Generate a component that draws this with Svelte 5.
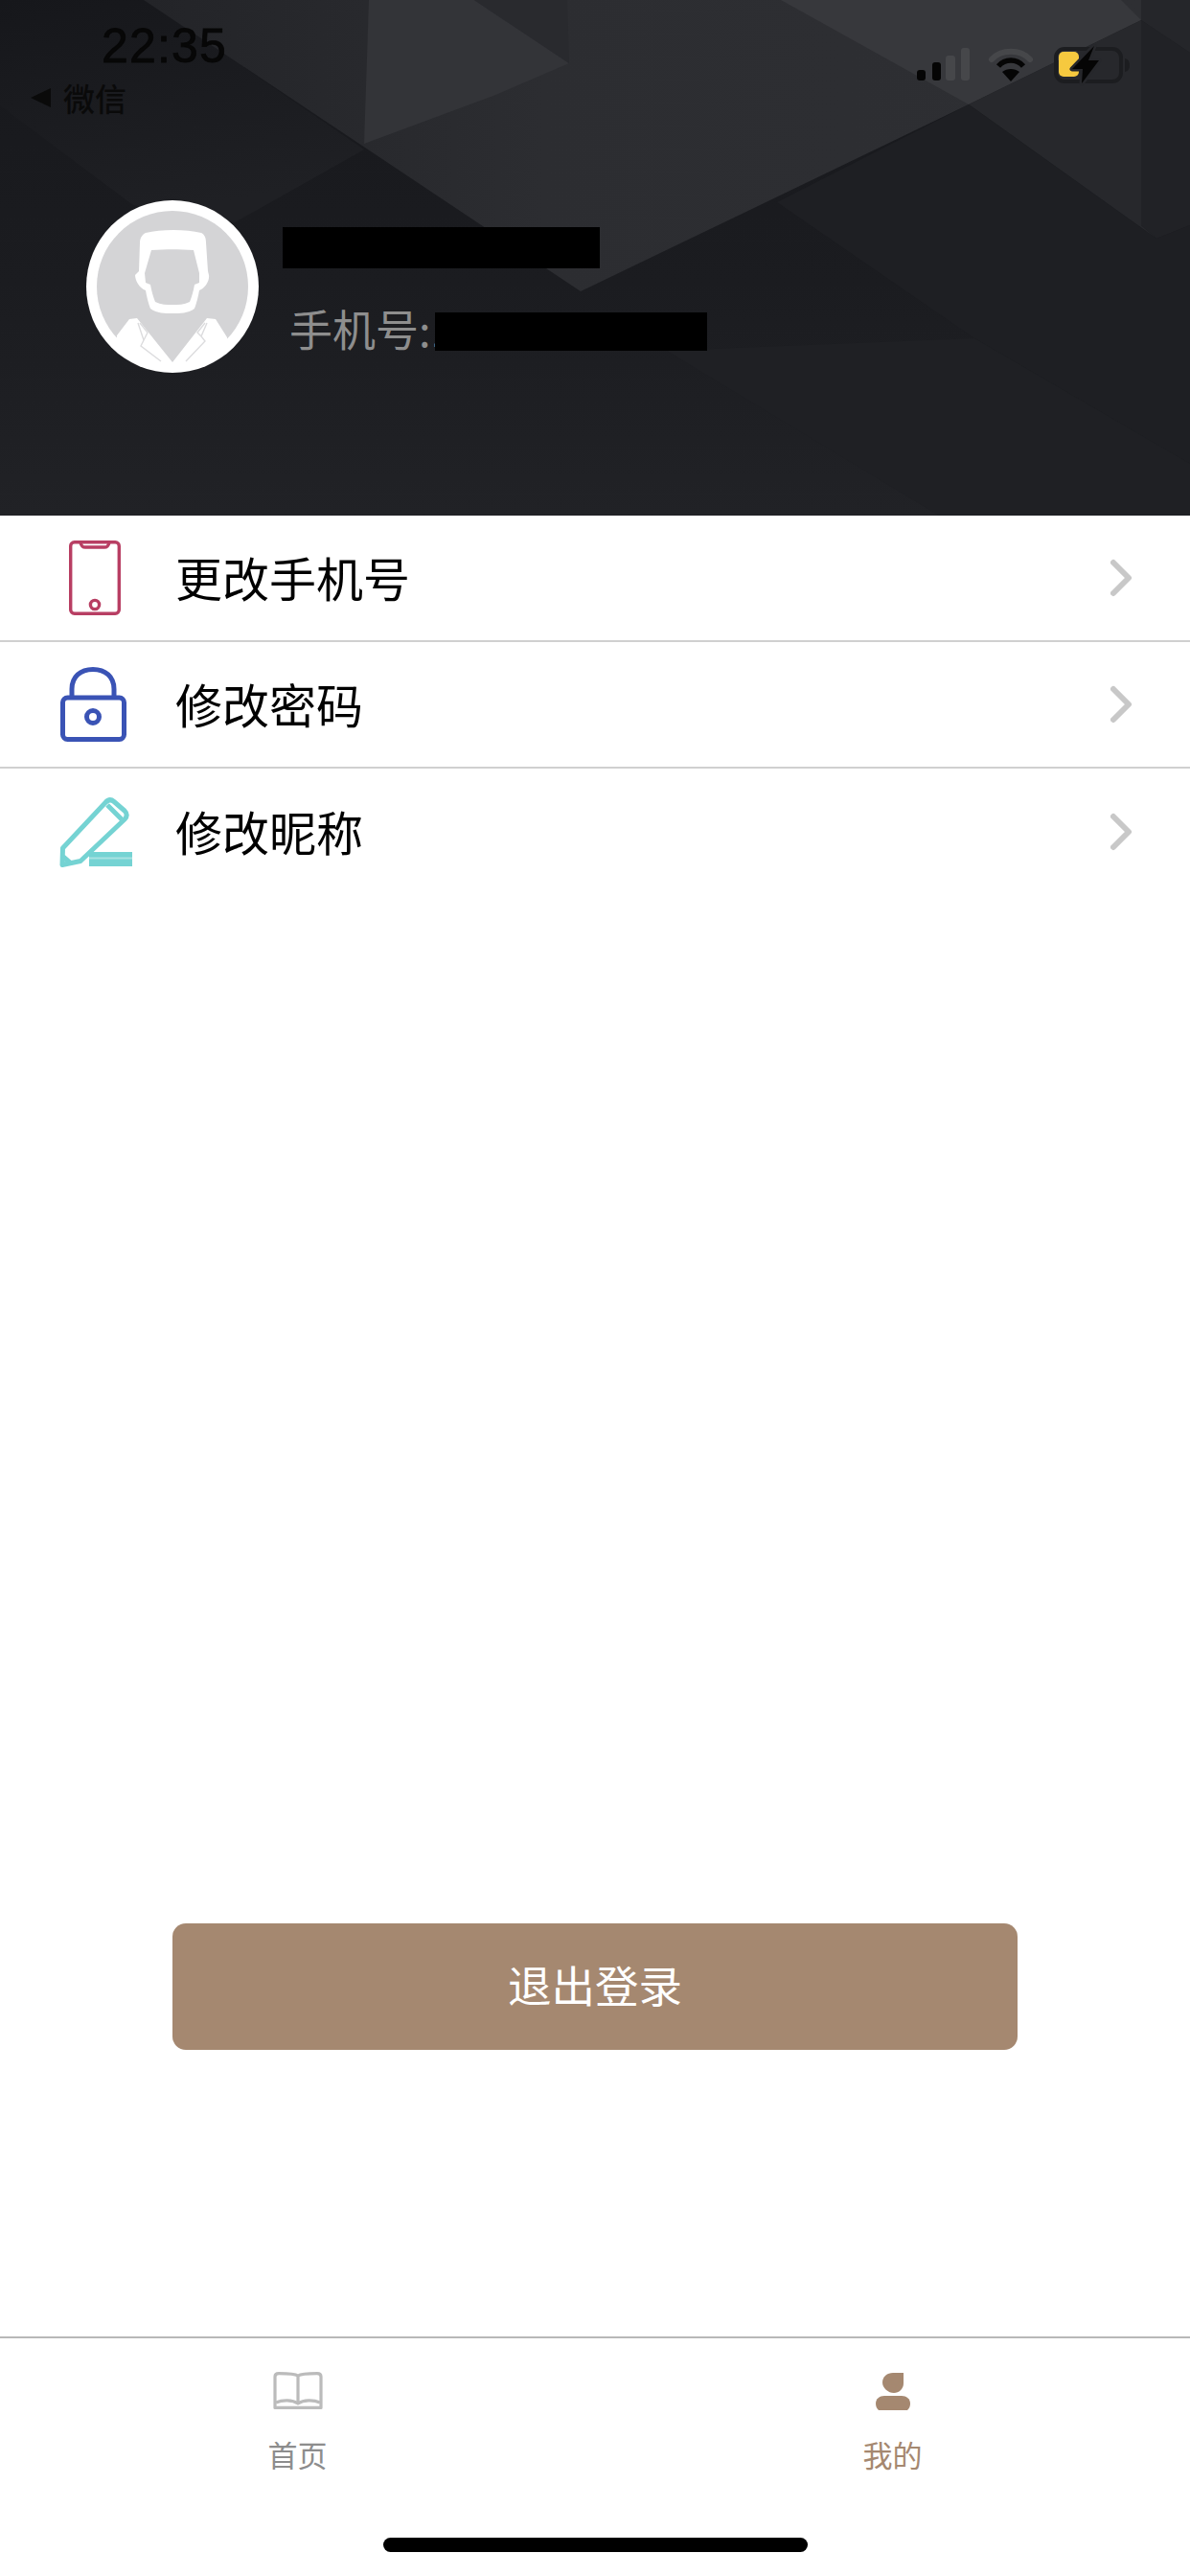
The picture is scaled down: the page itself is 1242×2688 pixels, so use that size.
<script>
  const menu = [
    { label: '更改手机号', icon: 'phone' },
    { label: '修改密码', icon: 'lock' },
    { label: '修改昵称', icon: 'pencil' }
  ];
</script>

<div class="page">
  <header class="hero">
    <svg class="hero-bg" viewBox="0 0 1242 538" preserveAspectRatio="none" aria-hidden="true">
      <defs>
        <linearGradient id="base" x1="0" y1="0" x2="0" y2="1">
          <stop offset="0" stop-color="#17181c" />
          <stop offset="0.55" stop-color="#1b1c20" />
          <stop offset="1" stop-color="#212226" />
        </linearGradient>
        <linearGradient id="upper" x1="0" y1="0" x2="1" y2="0">
          <stop offset="0" stop-color="#232428" />
          <stop offset="0.4" stop-color="#2c2d31" />
          <stop offset="1" stop-color="#2e2f33" />
        </linearGradient>
        <linearGradient id="leftband" x1="0" y1="0" x2="0.3" y2="1">
          <stop offset="0" stop-color="#16171b" />
          <stop offset="1" stop-color="#1f2024" />
        </linearGradient>
      </defs>
      <rect width="1242" height="538" fill="url(#base)" />
      <polygon points="0,110 139,214 245,232 380,156 238,59 150,0 0,0" fill="url(#leftband)" />
      <polygon points="150,0 606,304 1011,109 1191,21 1191,0" fill="url(#upper)" />
      <polygon points="385,0 380,150 515,100 594,66 495,0" fill="#333438" />
      <polygon points="495,0 594,66 592,0" fill="#292a2e" />
      <polygon points="815,0 1011,109 1191,21 1170,0" fill="#37383c" />
      <polygon points="1011,109 1191,21 1191,235 1207,249" fill="#27282c" />
      <polygon points="1191,21 1242,55 1242,235 1207,249 1191,235" fill="#212226" />
      <polygon points="1191,0 1242,0 1242,55 1191,21" fill="#25262a" />
      <polygon points="1017,353 1242,484 1242,235 1207,249 1011,109 811,211" fill="#1e1f23" />
      <polygon points="696,366 1017,353 1242,484 1242,538 980,538" fill="#1f2024" />
    </svg>

    <div class="status">
      <div class="status-left">
        <div class="time">22:35</div>
        <div class="back"><span class="tri"></span><span>微信</span></div>
      </div>
      <svg class="status-right" width="232" height="44" viewBox="0 0 232 44" aria-hidden="true">
        <g fill="#050505">
          <rect x="7" y="27" width="9" height="11" rx="3" />
          <rect x="23" y="19" width="9" height="19" rx="3" />
        </g>
        <g fill="#46474a">
          <rect x="37" y="12" width="10" height="26" rx="3" />
          <rect x="53" y="4" width="9" height="34" rx="3" />
        </g>
        <path d="M85 16 C95 5 115 5 125 16" fill="none" stroke="#46474a" stroke-width="6" stroke-linecap="round" />
        <path d="M92 23 C99 15 111 15 118 23" fill="none" stroke="#050505" stroke-width="5.5" />
        <path d="M105 39 L96 29 C101 25 109 25 114 29 Z" fill="#050505" />
        <rect x="152" y="5" width="68" height="34" rx="9" fill="none" stroke="#1c1d20" stroke-width="4" />
        <path d="M224 15 C228 16 229 19 229 22 C229 25 228 28 224 29 Z" fill="#1c1d20" />
        <rect x="155" y="8" width="21" height="26" rx="5" fill="#f6c93f" />
        <path d="M192 2 L169 26 L180 26 L179 41 L197 17 L186 17 Z" fill="#26272b" stroke="#26272b" stroke-width="5" stroke-linejoin="round" />
        <path d="M192 2 L169 26 L180 26 L179 41 L197 17 L186 17 Z" fill="#050505" />
      </svg>
    </div>

    <div class="profile">
      <svg class="avatar" width="180" height="180" viewBox="0 0 180 180" role="img" aria-label="头像">
        <defs>
          <clipPath id="ring"><circle cx="90" cy="90" r="89" /></clipPath>
        </defs>
        <circle cx="90" cy="90" r="90" fill="#fff" />
        <circle cx="90" cy="90" r="79" fill="#d4d4d6" />
        <path fill="#fff" d="M62 34 C78 30 104 30 120 34 C124 36 125 40 125 44 L127 74 L128 78 C129 84 124 92 118 94 C117 100 115 108 113 113 C106 118 98 118 90 118 C82 118 74 118 67 113 C65 108 63 100 62 94 C56 92 51 84 51 78 L55 74 L56 44 C56 40 58 36 62 34 Z" />
        <path fill="#d4d4d6" d="M68 52 C84 51 96 51 112 52 L118 76 L118 86 L113 88 C112 94 110 101 108 106 C102 109 96 109 90 109 C84 109 78 109 72 106 C70 101 68 94 67 88 L62 86 L61 76 Z" />
        <g clip-path="url(#ring)">
          <path fill="#fff" d="M32 141 L45 124 L53 123 L90 169 L126 123 L135 124 L147 143 L147 180 L32 180 Z" />
          <path fill="none" stroke="#dcdcde" stroke-width="1.4" d="M54 128 L60 146 L57 152 L78 168 M126 128 L120 142 L124 147 L104 168 M56 128 L64 138 L60 146 M124 128 L116 138 L120 142" />
        </g>
      </svg>
      <div class="info">
        <div class="redact name-box"></div>
        <div class="phone">
          <span class="phone-text">手机号:1</span>
          <div class="redact phone-box"></div>
        </div>
      </div>
    </div>
  </header>

  <main class="main">
    <ul class="menu">
      {#each menu as item}
        <li class="row">
          <svg class="row-icon" width="80" height="80" viewBox="0 0 80 80" aria-hidden="true">
            {#if item.icon === 'phone'}
              <g fill="none" stroke="#b83e63" stroke-width="3.4">
                <rect x="13.7" y="2.7" width="50.6" height="74.6" rx="4" />
                <path d="M24 3 C25 7 26 8 29 8 H49 C52 8 53 7 54 3" />
                <circle cx="39" cy="68" r="4.6" />
              </g>
            {:else if item.icon === 'lock'}
              <g fill="none" stroke="#3a53b5" stroke-width="5">
                <rect x="5.5" y="33" width="64" height="43.5" rx="5" />
                <path d="M15 33 V24 C15 11 24 3.5 37 3.5 C50 3.5 59 11 59 24 V33" />
                <circle cx="37" cy="53" r="6.5" />
              </g>
            {:else}
              <g fill="none" stroke="#75d3d3" stroke-width="5" stroke-linejoin="round">
                <path d="M5.5 57 L50 9.5 C53 6 56 6 59 8.5 L70 18 C73 21 73 24 70 27 L24 70.5 L5 74.5 Z" />
                <path d="M52 12 L67 27 M6 66 L14 73" />
              </g>
              <rect x="33" y="61" width="45" height="15" fill="#75d3d3" />
              <rect x="33" y="66.5" width="45" height="2" fill="#a8e2e2" />
            {/if}
          </svg>
          <span class="row-label">{item.label}</span>
          <svg class="chev" width="24" height="40" viewBox="0 0 24 40" aria-hidden="true">
            <path d="M3 4 L19 20 L3 36" fill="none" stroke="#c8c8c8" stroke-width="6" stroke-linecap="round" stroke-linejoin="round" />
          </svg>
        </li>
      {/each}
    </ul>
    <button class="logout" type="button">退出登录</button>
  </main>

  <footer class="tabbar">
    <nav class="tabs">
      <div class="tab">
        <svg width="60" height="40" viewBox="0 0 60 40" aria-hidden="true">
          <g fill="none" stroke="#bbbbbb" stroke-width="3.2" stroke-linejoin="round">
            <path d="M30 4 C27 2 20 1.6 10 1.6 C7 1.6 6 3 6 5 V37.4 H54 V5 C54 3 53 1.6 50 1.6 C40 1.6 33 2 30 4 Z" />
            <path d="M30 4 V32" />
            <path d="M7 32 C14 29 24 29 30 33 C36 29 46 29 53 32" />
          </g>
        </svg>
        <span>首页</span>
      </div>
      <div class="tab active">
        <svg width="60" height="40" viewBox="0 0 60 40" aria-hidden="true">
          <path fill="#a58870" d="M41 1 V12 C41 18 36 22 31 22 C25 22 19 17 19 11 C19 5 24 1 30 1 Z" />
          <path fill="#a58870" d="M15 40 C13 38 12 36 12 33 C12 28 16 25 21 25 H39 C44 25 48 28 48 33 C48 36 47 38 45 40 Z" />
        </svg>
        <span>我的</span>
      </div>
    </nav>
    <div class="home-bar"></div>
  </footer>
</div>

<style>
  :global(body) {
    margin: 0;
    background: #fff;
  }
  .page {
    width: 1242px;
    height: 2688px;
    display: flex;
    flex-direction: column;
    font-family: "Noto Sans CJK SC", "Liberation Sans", sans-serif;
    background: #fff;
  }
  .hero {
    position: relative;
    height: 538px;
    flex: none;
    overflow: hidden;
  }
  .hero-bg {
    position: absolute;
    inset: 0;
    width: 100%;
    height: 100%;
  }
  .status {
    position: relative;
    height: 209px;
    display: flex;
    justify-content: space-between;
    align-items: flex-start;
    padding: 0 60px 0 32px;
    box-sizing: border-box;
    color: #0a0a0a;
  }
  .status-left {
    padding-top: 20px;
  }
  .time {
    font-family: "Liberation Sans", sans-serif;
    font-size: 50px;
    line-height: 56px;
    letter-spacing: 1.2px;
    margin-left: 74px;
    color: #070707;
    -webkit-text-stroke: 0.8px #070707;
  }
  .back {
    display: flex;
    align-items: center;
    gap: 13px;
    font-size: 33px;
    font-weight: 500;
    line-height: 46px;
    margin-top: 3px;
  }
  .tri {
    width: 0;
    height: 0;
    border-top: 10px solid transparent;
    border-bottom: 10px solid transparent;
    border-right: 21px solid #0a0a0a;
  }
  .status-right {
    margin-top: 46px;
  }
  .profile {
    position: relative;
    display: flex;
    align-items: flex-start;
    gap: 25px;
    padding-left: 90px;
  }
  .avatar {
    flex: none;
  }
  .info {
    display: flex;
    flex-direction: column;
    padding-top: 28px;
  }
  .redact {
    background: #000;
  }
  .name-box {
    width: 331px;
    height: 43px;
  }
  .phone {
    display: flex;
    align-items: center;
    height: 40px;
    margin-top: 46px;
    padding-left: 7px;
    color: #8e8e8e;
    font-size: 45px;
    line-height: 40px;
    white-space: nowrap;
  }
  .phone-text {
    padding-bottom: 6px;
  }
  .phone-box {
    width: 284px;
    height: 40px;
    margin-left: -21px;
  }
  .main {
    flex: 1;
    display: flex;
    flex-direction: column;
  }
  .menu {
    list-style: none;
    margin: 0;
    padding: 0;
  }
  .row {
    height: 132px;
    box-sizing: border-box;
    display: flex;
    align-items: center;
    padding: 0 59px 0 60px;
    border-bottom: 2px solid #d0d0d0;
  }
  .row:last-child {
    border-bottom: 0;
  }
  .row-icon {
    flex: none;
  }
  .row-label {
    flex: 1;
    margin-left: 43px;
    padding-bottom: 2px;
    font-size: 49px;
    line-height: 60px;
    color: #000;
    font-weight: 400;
  }
  .chev {
    flex: none;
  }
  .logout {
    margin: auto 0 299px 180px;
    width: 882px;
    height: 132px;
    border: 0;
    border-radius: 14px;
    background: #a58870;
    color: #fff;
    font-family: inherit;
    font-size: 45.5px;
    padding: 0 0 7px;
  }
  .tabbar {
    flex: none;
    height: 250px;
    box-sizing: border-box;
    border-top: 2px solid #b8b8b8;
    display: flex;
    flex-direction: column;
    align-items: center;
    padding-top: 35px;
  }
  .tabs {
    width: 100%;
    display: grid;
    grid-template-columns: 1fr 1fr;
  }
  .tab {
    display: flex;
    flex-direction: column;
    align-items: center;
    color: #8d8d8d;
    font-size: 31px;
    line-height: 40px;
  }
  .tab span {
    margin-top: 26px;
  }
  .tab.active {
    color: #a58870;
  }
  .home-bar {
    width: 443px;
    height: 15px;
    border-radius: 8px;
    background: #000;
    margin-top: 67px;
  }
</style>
